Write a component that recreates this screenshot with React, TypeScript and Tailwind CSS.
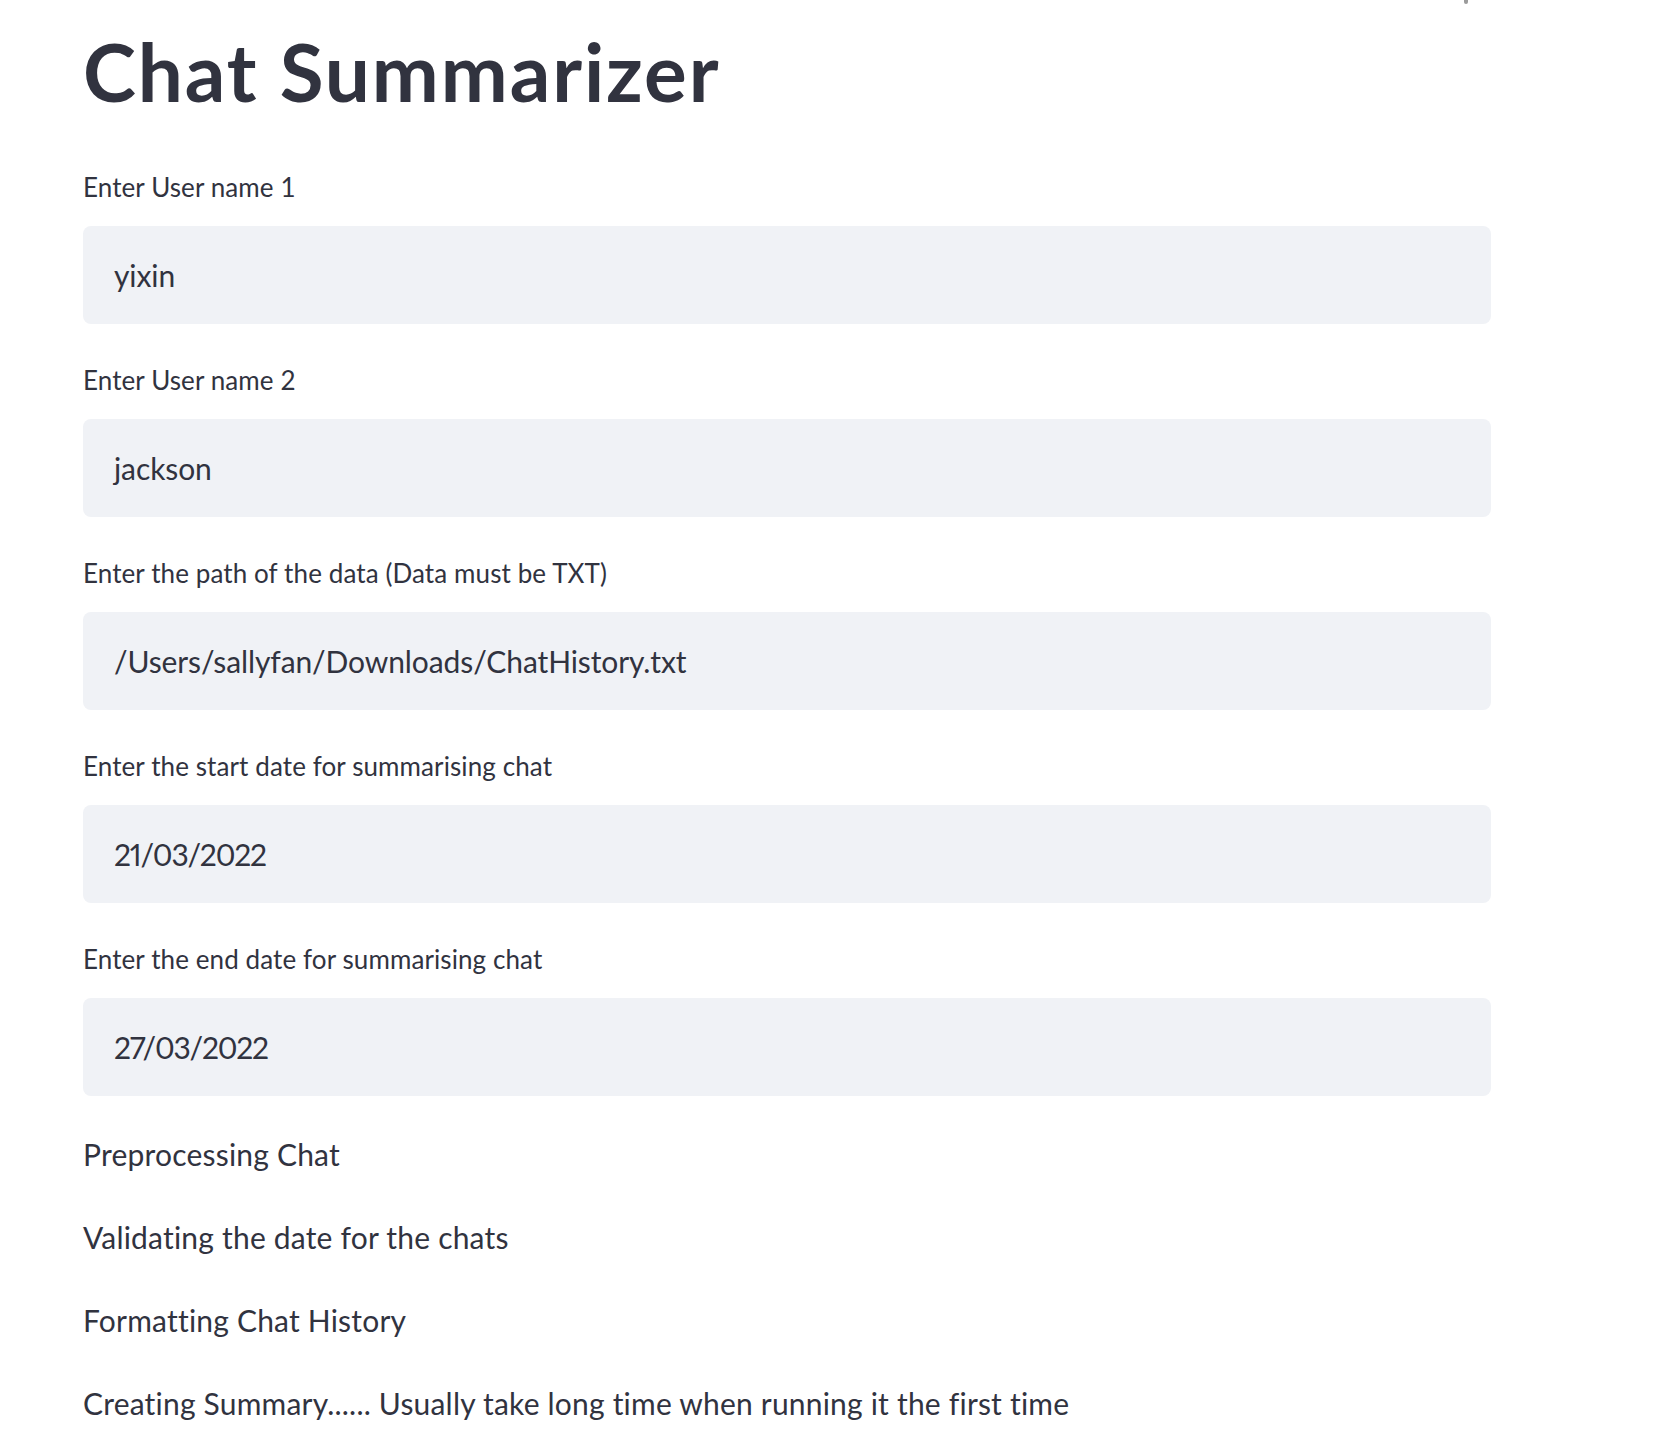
import React from "react";

const fields = [
  { label: "Enter User name 1", value: "yixin" },
  { label: "Enter User name 2", value: "jackson" },
  { label: "Enter the path of the data (Data must be TXT)", value: "/Users/sallyfan/Downloads/ChatHistory.txt" },
  { label: "Enter the start date for summarising chat", value: "21/03/2022", date: true },
  { label: "Enter the end date for summarising chat", value: "27/03/2022", date: true },
];

const steps = [
  "Preprocessing Chat",
  "Validating the date for the chats",
  "Formatting Chat History",
  "Creating Summary...... Usually take long time when running it the first time",
];

function TextField({ label, value, date }: { label: string; value: string; date?: boolean }) {
  return (
    <div className="flex flex-col">
      <label className="text-[26px] leading-[32px] tracking-[0.1px]">{label}</label>
      <div className="mt-[23px] flex h-[98px] items-center rounded-[8px] bg-[#f0f2f6] pl-[31px] text-[30px] leading-[36px] proportional-nums">
        <span className={date ? "tracking-[-1.2px]" : "tracking-[-0.1px]"}>{value}</span>
      </div>
    </div>
  );
}

export default function App() {
  return (
    <div className="relative min-h-screen bg-white font-['Lato',sans-serif] text-[#31333f]">
      {/* bit of the toolbar icon peeking in at the top */}
      <div className="absolute left-[1464px] top-[-4px] h-[8px] w-[4px] rounded-full bg-[#9b9b9b]" />

      <main className="ml-[83px] w-[1408px] pt-[23px]">
        <h1 className="text-[80px] font-bold leading-[96px] tracking-[1.9px]">Chat Summarizer</h1>

        <div className="mt-[52px] flex flex-col gap-[40px]">
          {fields.map((f) => (
            <TextField key={f.label} label={f.label} value={f.value} date={f.date} />
          ))}
        </div>

        <div className="mt-[40px] flex flex-col gap-[47px] text-[30px] leading-[36px] tracking-[0.2px]">
          {steps.map((s) => (
            <p key={s}>{s}</p>
          ))}
        </div>
      </main>
    </div>
  );
}
